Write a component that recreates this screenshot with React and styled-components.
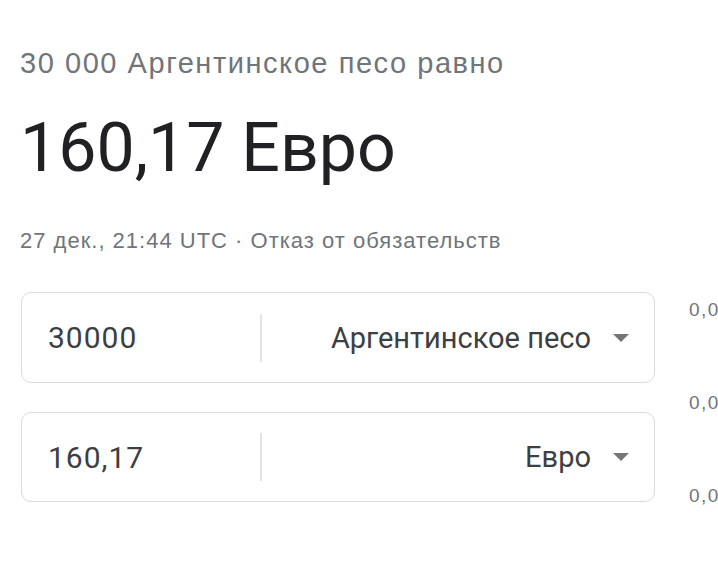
import React from "react";
import styled, { createGlobalStyle } from "styled-components";

const Global = createGlobalStyle`
  html, body { margin: 0; padding: 0; background: #fff; overflow: hidden; }
  body { font-family: Roboto, "Liberation Sans", Arial, sans-serif; }
`;

const Page = styled.div`
  width: 718px;
  height: 572px;
  padding: 45px 0 0 20px;
  box-sizing: border-box;
  overflow: hidden;
`;

const Subtitle = styled.div`
  font-family: "Liberation Sans", Arial, sans-serif;
  font-size: 29px;
  letter-spacing: 1.55px;
  line-height: 36px;
  color: #70757a;
  white-space: nowrap;
`;

const Result = styled.div`
  margin-top: 27px;
  font-size: 68px;
  line-height: 80px;
  color: #202124;
  white-space: nowrap;
`;

const Meta = styled.div`
  margin-top: 39px;
  font-family: "Liberation Sans", Arial, sans-serif;
  font-size: 22px;
  letter-spacing: 1px;
  line-height: 28px;
  color: #70757a;
  white-space: nowrap;
`;

const Converter = styled.div`
  margin-top: 37px;
  display: flex;
  align-items: flex-start;
  gap: 34px;
  padding-left: 1px;
`;

const Fields = styled.div`
  display: flex;
  flex-direction: column;
  gap: 29px;
  width: 634px;
  flex-shrink: 0;
`;

const Field = styled.div`
  height: ${(p) => p.$h}px;
  box-sizing: border-box;
  border: 1px solid #dadce0;
  border-radius: 10px;
  display: flex;
  align-items: center;
`;

const Amount = styled.div`
  width: 238px;
  box-sizing: border-box;
  padding-left: 26px;
  font-size: 30px;
  letter-spacing: 1px;
  color: #3c4043;
  white-space: nowrap;
`;

const Divider = styled.div`
  width: 2px;
  height: 48px;
  background: #e3e3e3;
`;

const Currency = styled.div`
  flex: 1;
  display: flex;
  align-items: center;
  justify-content: flex-end;
  gap: 22px;
  padding-right: 25px;
  font-size: 29px;
  color: #3c4043;
  white-space: nowrap;
`;

const Arrow = styled.span`
  width: 0;
  height: 0;
  border-left: 8.5px solid transparent;
  border-right: 8.5px solid transparent;
  border-top: 8px solid #757575;
`;

const Rates = styled.div`
  display: flex;
  flex-direction: column;
  padding-top: 7px;
  gap: 71px;
  font-family: "Liberation Sans", Arial, sans-serif;
  font-size: 19px;
  letter-spacing: 1.5px;
  line-height: 22px;
  color: #70757a;
  white-space: nowrap;
`;

export default function App() {
  return (
    <Page>
      <Global />
      <Subtitle>30 000 Аргентинское песо равно</Subtitle>
      <Result>160,17 Евро</Result>
      <Meta>27 дек., 21:44 UTC · Отказ от обязательств</Meta>
      <Converter>
        <Fields>
          <Field $h={91}>
            <Amount>30000</Amount>
            <Divider />
            <Currency>
              Аргентинское песо
              <Arrow />
            </Currency>
          </Field>
          <Field $h={90}>
            <Amount>160,17</Amount>
            <Divider />
            <Currency>
              Евро
              <Arrow />
            </Currency>
          </Field>
        </Fields>
        <Rates>
          <span>0,0053 Евро</span>
          <span>0,0053 Евро</span>
          <span>0,0053 Евро</span>
        </Rates>
      </Converter>
    </Page>
  );
}
